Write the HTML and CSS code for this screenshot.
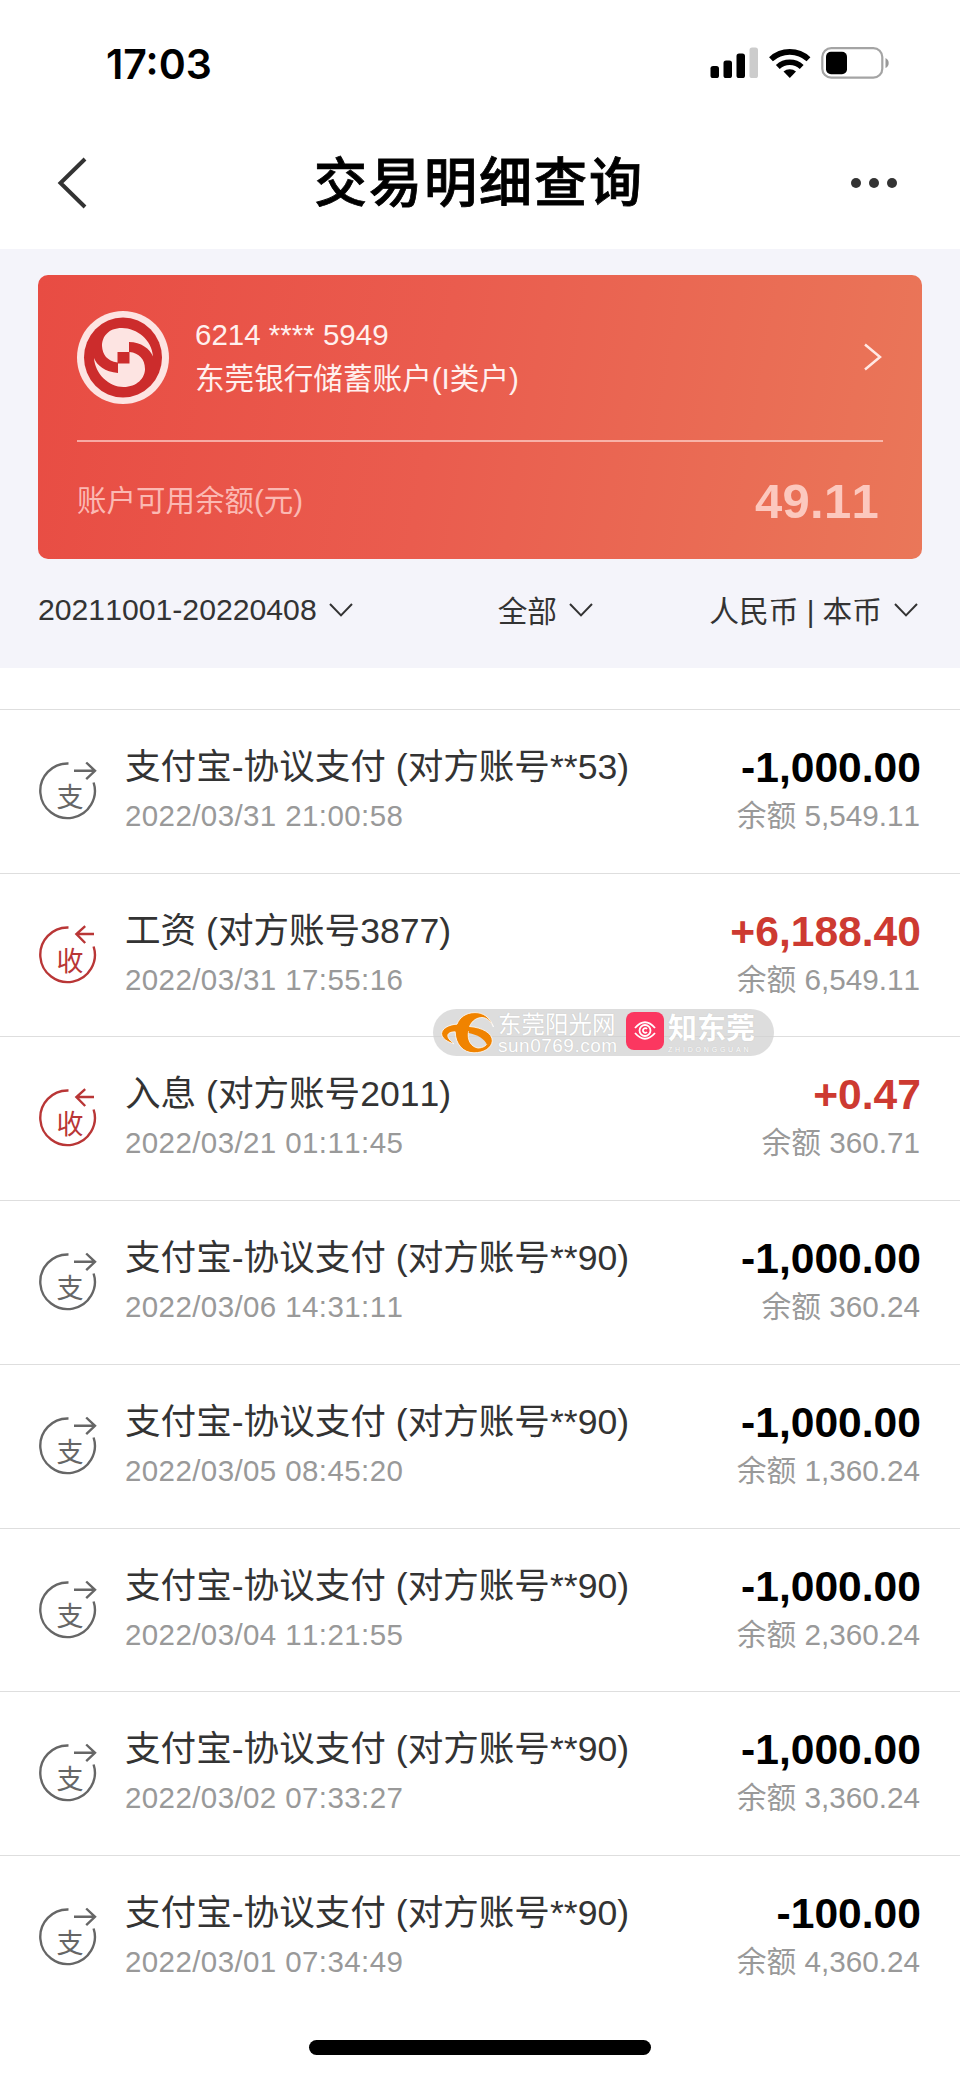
FILE: index.html
```html
<!DOCTYPE html>
<html lang="zh-CN">
<head>
<meta charset="utf-8">
<title>交易明细查询</title>
<link rel="stylesheet" href="styles.css">
</head>
<body>
<svg class="defs" width="0" height="0">
  <symbol id="pay" viewBox="0 0 60 60">
    <path d="M29.5 3.5A27.3 27.3 0 1 0 54.6 22.5M35 10.8H56M47.2 2.5L56 10.8L47.2 19.2"/>
  </symbol>
  <symbol id="recv" viewBox="0 0 60 60">
    <path d="M29.5 3.5A27.3 27.3 0 1 0 54.6 22.5M55 10H37M46.2 2.2L37.4 10L46.2 19"/>
  </symbol>
  <symbol id="down" viewBox="0 0 24 14"><path d="M1 1L12 12.4L23 1"/></symbol>
</svg>
<div class="screen">
  <div class="status">
    <span class="clock">17:03</span>
    <svg class="indicators" width="180" height="34" viewBox="0 0 180 34">
      <rect x="0.5" y="19" width="8.5" height="12" rx="2.6"/>
      <rect x="13.5" y="13.5" width="8.5" height="17.5" rx="2.6"/>
      <rect x="26.5" y="6.5" width="8.5" height="24.5" rx="2.6"/>
      <rect x="39.5" y="0.5" width="8.5" height="30.5" rx="2.6" fill="#ccc"/>
      <g fill="none" stroke="#000" stroke-width="5.6">
        <path d="M61 12.3A27.5 27.5 0 0 1 98.5 12.3"/>
        <path d="M67.8 20A17.5 17.5 0 0 1 91.7 20"/>
      </g>
      <path d="M79.8 31L73.5 24.6A9.2 9.2 0 0 1 86 24.6Z"/>
      <rect x="112.3" y="1.1" width="60" height="29.6" rx="9" fill="none" stroke="#a4a4a4" stroke-width="2.2"/>
      <rect x="116" y="4.8" width="21" height="22.4" rx="5"/>
      <path d="M175.5 11Q178.7 12.5 178.7 16Q178.7 19.5 175.5 21Z" fill="#999"/>
    </svg>
  </div>
  <div class="nav">
    <svg class="back" width="30" height="52" viewBox="0 0 30 52"><path d="M28 2L3.5 26L28 50"/></svg>
    <h1 class="title">交易明细查询</h1>
    <div class="more"><i class="dot"></i><i class="dot"></i><i class="dot"></i></div>
  </div>
  <div class="summary">
    <div class="card">
      <div class="account">
        <svg class="logo" width="92" height="94" viewBox="0 0 92 94">
          <ellipse cx="46" cy="46.500" rx="46" ry="46.500" fill="#fde4e2"/>
          <ellipse cx="46" cy="46.500" rx="39" ry="40" fill="#cc2c2c"/>
          <path d="M40.500 51.500V41H52V31C64 31 73 38 76 45.500C75 29 60 17 45 17C31 17 25 26 25 35C25.500 43.500 30 50 40.500 51.500Z" fill="#fde4e2"/>
          <path d="M52.500 41V52.500H41V62C28 61 19.500 54 17 47C18 63 32 76 46.500 76C60 76 68 67 68 58C68 48 62 42 52.500 41Z" fill="#fde4e2"/>
        </svg>
        <div class="account-text">
          <div class="number">6214 **** 5949</div>
          <div class="kind">东莞银行储蓄账户(I类户)</div>
        </div>
        <svg class="go" width="18" height="28" viewBox="0 0 18 28"><path d="M1 1.500L16 14L1 26.500"/></svg>
      </div>
      <div class="balance-line">
        <span class="balance-label">账户可用余额(元)</span>
        <span class="balance-value">49.11</span>
      </div>
    </div>
    <div class="filters">
      <div class="filter"><span class="range">20211001-20220408</span><svg class="chev"><use href="#down"/></svg></div>
      <div class="filter filter-type"><span>全部</span><svg class="chev"><use href="#down"/></svg></div>
      <div class="filter filter-currency"><span>人民币 | 本币</span><svg class="chev"><use href="#down"/></svg></div>
    </div>
  </div>
  <div class="list">
    <div class="row">
      <div class="icon"><svg class="ring"><use href="#pay"/></svg><span class="mark">支</span></div>
      <div class="info"><div class="name">支付宝-协议支付 (对方账号**53)</div><div class="time">2022/03/31 21:00:58</div></div>
      <div class="money"><div class="amount">-1,000.00</div><div class="rest">余额 5,549.11</div></div>
    </div>
    <div class="row income">
      <div class="icon"><svg class="ring"><use href="#recv"/></svg><span class="mark">收</span></div>
      <div class="info"><div class="name">工资 (对方账号3877)</div><div class="time">2022/03/31 17:55:16</div></div>
      <div class="money"><div class="amount">+6,188.40</div><div class="rest">余额 6,549.11</div></div>
    </div>
    <div class="row income">
      <div class="icon"><svg class="ring"><use href="#recv"/></svg><span class="mark">收</span></div>
      <div class="info"><div class="name">入息 (对方账号2011)</div><div class="time">2022/03/21 01:11:45</div></div>
      <div class="money"><div class="amount">+0.47</div><div class="rest">余额 360.71</div></div>
    </div>
    <div class="row">
      <div class="icon"><svg class="ring"><use href="#pay"/></svg><span class="mark">支</span></div>
      <div class="info"><div class="name">支付宝-协议支付 (对方账号**90)</div><div class="time">2022/03/06 14:31:11</div></div>
      <div class="money"><div class="amount">-1,000.00</div><div class="rest">余额 360.24</div></div>
    </div>
    <div class="row">
      <div class="icon"><svg class="ring"><use href="#pay"/></svg><span class="mark">支</span></div>
      <div class="info"><div class="name">支付宝-协议支付 (对方账号**90)</div><div class="time">2022/03/05 08:45:20</div></div>
      <div class="money"><div class="amount">-1,000.00</div><div class="rest">余额 1,360.24</div></div>
    </div>
    <div class="row">
      <div class="icon"><svg class="ring"><use href="#pay"/></svg><span class="mark">支</span></div>
      <div class="info"><div class="name">支付宝-协议支付 (对方账号**90)</div><div class="time">2022/03/04 11:21:55</div></div>
      <div class="money"><div class="amount">-1,000.00</div><div class="rest">余额 2,360.24</div></div>
    </div>
    <div class="row">
      <div class="icon"><svg class="ring"><use href="#pay"/></svg><span class="mark">支</span></div>
      <div class="info"><div class="name">支付宝-协议支付 (对方账号**90)</div><div class="time">2022/03/02 07:33:27</div></div>
      <div class="money"><div class="amount">-1,000.00</div><div class="rest">余额 3,360.24</div></div>
    </div>
    <div class="row">
      <div class="icon"><svg class="ring"><use href="#pay"/></svg><span class="mark">支</span></div>
      <div class="info"><div class="name">支付宝-协议支付 (对方账号**90)</div><div class="time">2022/03/01 07:34:49</div></div>
      <div class="money"><div class="amount">-100.00</div><div class="rest">余额 4,360.24</div></div>
    </div>
  </div>
  <div class="home"></div>
  <div class="badge">
    <svg class="sun" width="54" height="42" viewBox="0 0 54 42">
      <path fill="#f08300" fill-rule="evenodd" stroke="#fff" stroke-width="0.8" d="M52.500 15C49 5 42 0.600 34 0.600C25 0.600 18.500 5.500 16 12.200C8 12.500 1 16.500 0.600 21.500C0.600 26 6 30 13 31.800C9 28.500 6 25.500 7 22.500C8 20.500 11 19.800 14.200 19.800C14.500 32 22 40.800 33 40.800C43 40.800 50.500 36 51.300 29C51.500 21 41 15.500 28.500 14.500C31 8.500 36 5.500 41 5.500C46 5.500 50 9.500 52.500 15ZM27.500 19.500C36 19.500 46 24 47.500 29.500C46 33.500 42 36 37 36C30 35 26 28 27.500 19.500Z"/>
      <path fill="#f08300" d="M28 17.500C38 18 48 23 50 29L46 33C44 27 36 22.500 27.600 21Z"/>
    </svg>
    <div class="brand brand-sun"><span class="brand-cn">东莞阳光网</span><span class="brand-en">sun0769.com</span></div>
    <svg class="eye" width="38" height="38" viewBox="0 0 38 38">
      <rect width="38" height="38" rx="8" fill="#fb3760"/>
      <g fill="none" stroke="#fff" stroke-width="1.800"><path d="M9 16Q19 4.500 29 16M9 21Q19 32.500 29 21"/><circle cx="19" cy="18.500" r="5.500"/><path d="M21 17A2.300 2.300 0 1 0 21 20"/></g>
    </svg>
    <div class="brand brand-zhi"><span class="zhi-cn">知东莞</span><span class="zhi-en">ZHIDONGGUAN</span></div>
  </div>
</div>
</body>
</html>
```
FILE: styles.css
```css
* { box-sizing: border-box; }
body { margin: 0; background: #fff; font-family: "Liberation Sans", "Noto Sans CJK SC", sans-serif; font-kerning: none; color: #333; }
.defs { position: absolute; }
.screen { position: relative; width: 960px; height: 2079px; overflow: hidden; display: flex; flex-direction: column; }
.status { height: 116px; padding: 12px 70px 0 106px; display: flex; align-items: center; justify-content: space-between; }
.clock { font: 600 41px/50px Inter, sans-serif; color: #000; letter-spacing: 0; }
.nav { height: 133px; padding: 0 63px 0 57px; display: flex; align-items: center; justify-content: space-between; }
.back { fill: none; stroke: #333; stroke-width: 4; }
.title { margin: 2px 0 0 20px; font-size: 53px; line-height: 70px; font-weight: 500; letter-spacing: 2px; color: #000; -webkit-text-stroke: .8px #000; }
.more { display: flex; gap: 8px; }
.dot { width: 10px; height: 10px; border-radius: 50%; background: #333; }
.summary { height: 419px; padding: 26px 38px 0; background: #f4f4fa; }
.card { height: 284px; padding: 0 39px; border-radius: 10px; background: linear-gradient(100deg, #e84c43 0%, #ea5c4e 45%, #ea7759 100%); color: #fff; }
.account { height: 167px; padding-top: 36px; border-bottom: 2px solid rgba(255,220,215,.65); display: flex; align-items: flex-start; }
.account-text { margin: 1.5px 0 0 26px; flex: 1; color: #fff0ee; }
.number { font-size: 29.5px; line-height: 44px; }
.kind { font-size: 29.6px; line-height: 44px; }
.go { margin: 32px 1px 0 0; fill: none; stroke: #ffe8e4; stroke-width: 2.5; }
.balance-line { height: 117px; display: flex; align-items: center; justify-content: space-between; color: #fbb9b3; }
.balance-label { font-size: 29.5px; padding-bottom: 6px; }
.balance-value { padding-right: 4px; font-size: 49px; font-weight: 700; letter-spacing: .3px; color: #fcc8be; }
.filters { height: 101px; display: flex; align-items: center; font-size: 29.7px; color: #333; }
.filter { display: flex; align-items: center; gap: 12px; }
.range { font-size: 30.2px; }
.filter-type { margin-left: 145px; }
.filter-currency { margin-left: auto; padding-right: 4px; }
.chev { width: 24px; height: 14px; fill: none; stroke: #333; stroke-width: 2; }
.list { padding-top: 41px; display: flex; flex-direction: column; }
.row { height: 163.72px; padding: 36px 38px 0; border-top: 1px solid #dedede; display: flex; align-items: flex-start; }
.icon { width: 60px; height: 60px; margin: 14px 0 0 1px; display: grid; color: #666; }
.ring { grid-area: 1 / 1; width: 60px; height: 60px; fill: none; stroke: currentColor; stroke-width: 2.4; }
.mark { grid-area: 1 / 1; justify-self: center; font-size: 27px; line-height: 40px; padding: 18px 0 0 2px; }
.income .icon { color: #b93636; }
.info { margin-left: 26px; flex: 1; }
.name { font-size: 35.6px; line-height: 42px; white-space: nowrap; }
.time { margin-top: 8px; font-size: 29.5px; line-height: 40px; letter-spacing: .4px; color: #999; }
.money { text-align: right; white-space: nowrap; }
.amount { padding-right: 1px; font-size: 42.6px; line-height: 42px; font-weight: 700; color: #000; }
.income .amount { color: #cd3a31; }
.rest { margin-top: 8px; padding-right: 2px; font-size: 29.7px; line-height: 40px; color: #999; }
.home { position: absolute; left: 309px; top: 2040px; width: 342px; height: 15px; border-radius: 8px; background: #000; }
.badge { position: absolute; left: 433px; top: 1009px; width: 341px; height: 47px; border-radius: 24px; background: rgba(208,208,208,.72); display: flex; align-items: flex-start; padding: 3px 0 0 8px; color: #fff; }
.brand { display: flex; flex-direction: column; white-space: nowrap; text-shadow: 0 0 1px #bbb; }
.brand-sun { margin-left: 3px; width: 118px; }
.brand-cn { font-size: 23.5px; line-height: 26px; }
.brand-en { font-size: 19px; line-height: 15px; letter-spacing: .5px; }
.eye { margin: 0 4px 0 10px; }
.brand-zhi { width: 90px; }
.zhi-cn { font-size: 29px; line-height: 34px; font-weight: 700; }
.zhi-en { font-size: 7px; line-height: 7px; letter-spacing: 2.8px; }
```
